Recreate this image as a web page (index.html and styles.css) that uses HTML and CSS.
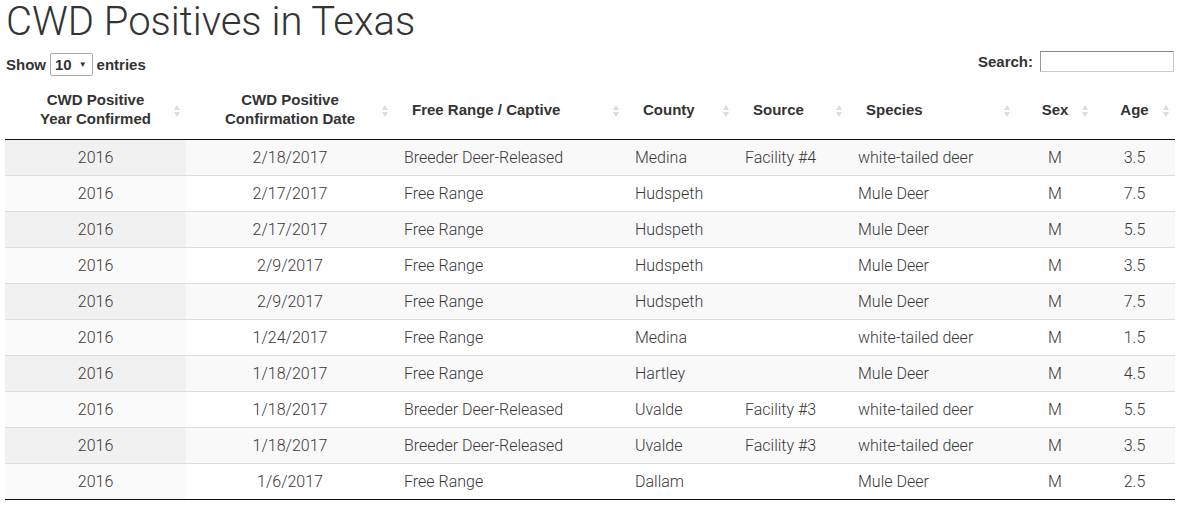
FILE: index.html
```html
<!DOCTYPE html>
<html>
<head>
<meta charset="utf-8">
<link rel="stylesheet" href="styles.css">
</head>
<body>
<h1 class="title">CWD Positives in Texas</h1>
<div class="controls">
  <label class="length">Show <span class="select">10 <span class="caret">&#9660;</span></span> entries</label>
  <label class="search">Search: <span class="search-input"></span></label>
</div>
<table class="data">
  <colgroup>
    <col class="w-year"><col class="w-date"><col class="w-range"><col class="w-county">
    <col class="w-source"><col class="w-species"><col class="w-sex"><col class="w-age">
  </colgroup>
  <thead>
    <tr>
      <th class="c">CWD Positive<br>Year Confirmed</th>
      <th class="c">CWD Positive<br>Confirmation Date</th>
      <th>Free Range / Captive</th>
      <th>County</th>
      <th>Source</th>
      <th>Species</th>
      <th class="c">Sex</th>
      <th class="c">Age</th>
    </tr>
  </thead>
  <tbody>
    <tr><td class="c s">2016</td><td class="c">2/18/2017</td><td>Breeder Deer-Released</td><td>Medina</td><td>Facility #4</td><td>white-tailed deer</td><td class="c">M</td><td class="c">3.5</td></tr>
    <tr><td class="c s">2016</td><td class="c">2/17/2017</td><td>Free Range</td><td>Hudspeth</td><td></td><td>Mule Deer</td><td class="c">M</td><td class="c">7.5</td></tr>
    <tr><td class="c s">2016</td><td class="c">2/17/2017</td><td>Free Range</td><td>Hudspeth</td><td></td><td>Mule Deer</td><td class="c">M</td><td class="c">5.5</td></tr>
    <tr><td class="c s">2016</td><td class="c">2/9/2017</td><td>Free Range</td><td>Hudspeth</td><td></td><td>Mule Deer</td><td class="c">M</td><td class="c">3.5</td></tr>
    <tr><td class="c s">2016</td><td class="c">2/9/2017</td><td>Free Range</td><td>Hudspeth</td><td></td><td>Mule Deer</td><td class="c">M</td><td class="c">7.5</td></tr>
    <tr><td class="c s">2016</td><td class="c">1/24/2017</td><td>Free Range</td><td>Medina</td><td></td><td>white-tailed deer</td><td class="c">M</td><td class="c">1.5</td></tr>
    <tr><td class="c s">2016</td><td class="c">1/18/2017</td><td>Free Range</td><td>Hartley</td><td></td><td>Mule Deer</td><td class="c">M</td><td class="c">4.5</td></tr>
    <tr><td class="c s">2016</td><td class="c">1/18/2017</td><td>Breeder Deer-Released</td><td>Uvalde</td><td>Facility #3</td><td>white-tailed deer</td><td class="c">M</td><td class="c">5.5</td></tr>
    <tr><td class="c s">2016</td><td class="c">1/18/2017</td><td>Breeder Deer-Released</td><td>Uvalde</td><td>Facility #3</td><td>white-tailed deer</td><td class="c">M</td><td class="c">3.5</td></tr>
    <tr><td class="c s">2016</td><td class="c">1/6/2017</td><td>Free Range</td><td>Dallam</td><td></td><td>Mule Deer</td><td class="c">M</td><td class="c">2.5</td></tr>
  </tbody>
</table>
</body>
</html>
```
FILE: styles.css
```css
html, body { margin: 0; padding: 0; background: #fff; }
body { padding: 0 5px; color: #333; font-family: Roboto, "Liberation Sans", sans-serif; }
.title {
  margin: 0;
  font-family: Roboto, sans-serif;
  font-weight: 300;
  font-size: 40px;
  line-height: 44px;
  color: #333;
  padding-left: 1px;
}
.controls {
  display: flex;
  justify-content: space-between;
  align-items: flex-start;
  margin-top: 7px;
  height: 32px;
  font-family: "Liberation Sans", Arial, sans-serif;
  font-weight: bold;
  font-size: 15px;
  color: #333;
}
.length { display: flex; align-items: center; gap: 4px; margin-top: 2px; padding-left: 1px; }
.select {
  display: inline-flex; align-items: center; gap: 7px;
  box-sizing: border-box; height: 23px; padding: 0 5px 0 4px;
  border: 1px solid #aaa; border-radius: 2px; background: #fff;
  font-weight: bold; font-size: 15px;
}
.caret { font-size: 8px; }
.search { display: flex; align-items: center; gap: 7px; margin-right: 1px; }
.search-input {
  display: inline-block; box-sizing: border-box; width: 134px; height: 21px;
  border: 1px solid #ccc; border-top-color: #888; border-left-color: #999; background: #fff;
}
.data {
  border-collapse: collapse;
  table-layout: fixed;
  width: 1170px;
}
.w-year { width: 181px; }
.w-date { width: 208px; }
.w-range { width: 231px; }
.w-county { width: 110px; }
.w-source { width: 113px; }
.w-species { width: 168px; }
.w-sex { width: 78px; }
.w-age { width: 81px; }
.data th {
  font-family: "Liberation Sans", Arial, sans-serif;
  font-weight: bold;
  font-size: 15px;
  line-height: 19px;
  color: #333;
  text-align: left;
  padding: 7px 18px 11px 18px;
  border-bottom: 1px solid #111;
  position: relative;
}
.data th.c { text-align: center; }
.data th::before,
.data th::after {
  content: "";
  position: absolute;
  right: 6px;
  width: 0; height: 0;
  border-left: 3.5px solid transparent;
  border-right: 3.5px solid transparent;
}
.data th::before {
  top: calc(50% - 6px);
  border-bottom: 5px solid #dcdcdc;
}
.data th::after {
  top: calc(50% + 1px);
  border-top: 5px solid #dcdcdc;
}
.data td {
  font-family: Roboto, sans-serif;
  font-weight: 300;
  font-size: 16px;
  line-height: 19px;
  color: #383838;
  padding: 8px 10px;
  height: 19px;
  border-top: 1px solid #ddd;
  white-space: nowrap;
}
.data tbody tr:first-child td { border-top: none; }
.data tbody tr:last-child td { border-bottom: 1px solid #111; }
.data td.c { text-align: center; }
.data tbody tr:nth-child(odd) { background: #f9f9f9; }
.data tbody tr:nth-child(odd) td.s { background: #f1f1f1; }
.data tbody tr:nth-child(even) td.s { background: #fafafa; }
```
